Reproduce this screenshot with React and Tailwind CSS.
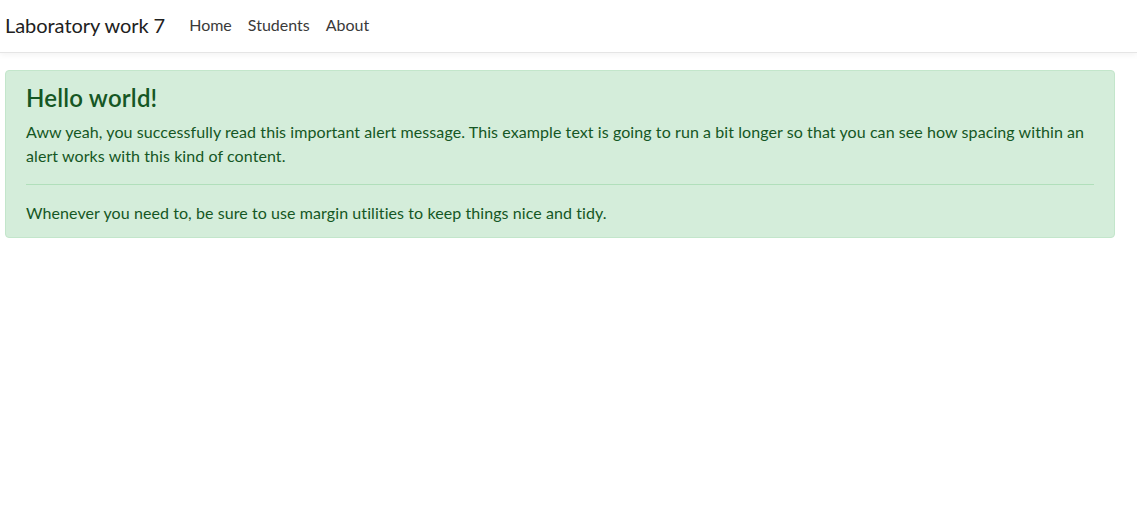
export default function App() {
  return (
    <div className="min-h-[528px] bg-white font-['Lato',sans-serif] text-[16px] leading-[24px] text-[#212529]">
      <nav className="flex h-[53px] items-center border-b border-[#e5e5e5] bg-white pb-[2px] pl-[5px] shadow-[0_2px_6px_rgba(0,0,0,0.05)]">
        <a className="mr-[16px] text-[20px] leading-[30px] tracking-[-0.05px] text-[#212121]">Laboratory work 7</a>
        <ul className="flex">
          <li><a className="block px-[8px] text-[16px] text-[#3a3a3a]">Home</a></li>
          <li><a className="block px-[8px] text-[16px] text-[#3a3a3a]">Students</a></li>
          <li><a className="block px-[8px] text-[16px] text-[#3a3a3a]">About</a></li>
        </ul>
      </nav>
      <main className="pt-[17px] pl-[5px]">
        <div className="w-[1110px] rounded-[4px] border border-[#c3e6cb] bg-[#d4edda] px-[20px] py-[12px] tracking-[0.08px] text-[#155724]">
          <h4 className="mb-[8px] text-[24px] font-semibold leading-[29px] tracking-[0.2px]">Hello world!</h4>
          <p>
            Aww yeah, you successfully read this important alert message. This example text is going to run a bit longer so that you can see how spacing within an alert works with this kind of content.
          </p>
          <hr className="my-[16px] border-t border-[#b1dfbb]" />
          <p>Whenever you need to, be sure to use margin utilities to keep things nice and tidy.</p>
        </div>
      </main>
    </div>
  );
}
